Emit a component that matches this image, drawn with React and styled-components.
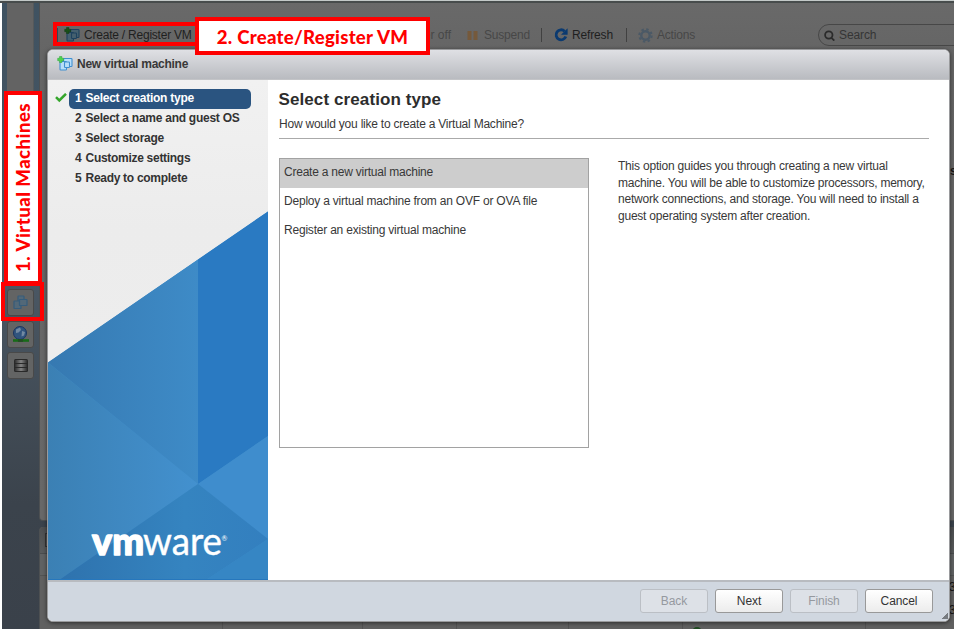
import React from 'react';
import styled, { createGlobalStyle } from 'styled-components';

const Global = createGlobalStyle`
  * { box-sizing: border-box; }
  body { margin: 0; overflow: hidden; font-family: "Liberation Sans", Arial, sans-serif; font-size: 12px; color: #383838; background: #fff; }
`;

const Screen = styled.div`
  position: relative;
  width: 954px;
  height: 629px;
  overflow: hidden;
  padding-left: 2px;
  display: flex;
  flex-direction: column;
`;
const TopEdge = styled.div`
  flex: none;
  height: 3px;
  margin-left: -2px;
  border-top: 1px solid #c3c9c8;
  background: #474c4c;
`;
const Workspace = styled.div`
  flex: 1;
  min-height: 0;
  display: flex;
  background: linear-gradient(#3f5261, #4a5763 45%, #3b434c 80%, #3a414a);
`;
const Rail = styled.nav`
  flex: none;
  width: 37px;
  display: flex;
  flex-direction: column;
  align-items: center;
  gap: 4px;
`;
const RailPanel = styled.div`
  width: 27px;
  height: 278px;
  margin-bottom: 4px;
  background: #636363;
  border-right: 1px solid #55595b;
`;
const RailButton = styled.div`
  width: 27px;
  height: 27px;
  border: 1px solid #494949;
  border-radius: 3px;
  background: #636464;
  display: flex;
  align-items: center;
  justify-content: center;
  margin-bottom: 0.5px;
`;
const Main = styled.main`
  flex: 1;
  display: flex;
  flex-direction: column;
  gap: 6px;
`;
const Content = styled.section`
  height: 518px;
  border: solid #4d5052;
  border-width: 0 0 1px 1px;
  border-radius: 0 0 0 4px;
  background: linear-gradient(#696969, #656565 50px, #686868);
`;
const Toolbar = styled.div`
  height: 46px;
  padding: 18px 0 0 13px;
  display: flex;
  align-items: center;
`;
const Tool = styled.div`
  flex: none;
  width: ${p => p.$w}px;
  padding-left: ${p => p.$pad || 0}px;
  display: flex;
  align-items: center;
  gap: ${p => p.$gap || 5}px;
  justify-content: ${p => (p.$end ? 'flex-end' : 'flex-start')};
  color: ${p => (p.$off ? '#474747' : '#1f1f1f')};
  letter-spacing: ${p => p.$ls || 0}px;
  white-space: nowrap;
`;
const Divider = styled.i`
  flex: none;
  width: 1px;
  height: 14px;
  background: #414141;
`;
const Accent = styled(Divider)`
  margin-left: 4px;
  margin-right: -5px;
  background: #2c4a59;
`;
const SearchBox = styled.div`
  flex: none;
  margin-left: 122px;
  width: 150px;
  height: 22px;
  border: 1px solid #474747;
  border-radius: 11px;
  padding-left: 5px;
  display: flex;
  align-items: center;
  gap: 4px;
  color: #353535;
  letter-spacing: -0.1px;
`;
const Tasks = styled.section`
  flex: 1;
  display: flex;
  flex-direction: column;
  border-left: 1px solid #4d5052;
  border-radius: 4px 0 0 0;
  overflow: hidden;
  background: #606263;
`;
const TasksBar = styled.div`
  height: 27px;
  padding: 6px 5px;
  background: linear-gradient(#4d4f51, #595b5c);
  border-bottom: 1px solid #4b4d4e;
`;
const TasksIcon = styled.i`
  display: block;
  width: 12px;
  height: 14px;
  border: 1px solid #333;
`;
const TaskHead = styled.div`
  height: 22px;
  border-bottom: 1px solid #525454;
`;
const TaskGrid = styled.div`
  flex: 1;
  display: grid;
  grid-template-columns: 183px 140px 94px 112px 114px 183px 1fr;
`;
const TaskCell = styled.div`
  height: 100%;
  border-right: 1px solid #535353;
  display: flex;
  align-items: flex-end;
  padding-left: 9px;
  background: #606060;
`;
const StatusDot = styled.i`
  width: 10px;
  height: 10px;
  border-radius: 50%;
  background: #1f4a21;
  margin-bottom: -8px;
`;

const Dialog = styled.section`
  position: absolute;
  left: 47px;
  top: 49px;
  width: 903px;
  height: 573px;
  border: 1px solid #9a9b9d;
  border-radius: 6px;
  overflow: hidden;
  background: #fff;
  box-shadow: 0 1px 4px rgba(0, 0, 0, 0.55);
  display: flex;
  flex-direction: column;
`;
const DialogHeader = styled.header`
  flex: none;
  height: 30px;
  padding: 0 0 2px 9px;
  display: flex;
  align-items: center;
  gap: 4px;
  font-weight: bold;
  letter-spacing: -0.26px;
  background: linear-gradient(#dfe0e4, #b9bbc0);
  border-bottom: 1px solid #c3c4c7;
`;
const DialogBody = styled.div`
  flex: 1;
  display: flex;
  min-height: 0;
`;
const Side = styled.aside`
  position: relative;
  flex: none;
  width: 220px;
  background: linear-gradient(#f1f1f1, #ececec 30%, #efefef);
  padding: 9px 0 0 7px;
`;
const SideArt = styled.svg`
  position: absolute;
  left: 0;
  top: 0;
`;
const Step = styled.div`
  position: relative;
  display: grid;
  grid-template-columns: 14px 182px;
  align-items: center;
  height: 20px;
  font-weight: bold;
`;
const StepName = styled.div`
  height: 20px;
  line-height: 18px;
  padding-left: 6px;
  border-radius: 5px;
  white-space: nowrap;
  color: ${p => (p.$on ? '#fff' : '#333')};
  background: ${p => (p.$on ? '#2a5480' : 'transparent')};
  letter-spacing: ${p => p.$ls}px;
`;
const StepNumber = styled.span`
  display: inline-block;
  width: 10.5px;
`;
const Pane = styled.div`
  flex: 1;
  padding: 10px 20px 0 11px;
`;
const Title = styled.h1`
  margin: 0 0 0 -0.5px;
  font-size: 17px;
  line-height: 20px;
  letter-spacing: 0.1px;
  color: #2d2d2d;
`;
const Question = styled.p`
  margin: 0;
  height: 29px;
  padding-top: 7px;
  line-height: 14px;
  letter-spacing: -0.22px;
  border-bottom: 1px solid #aaa;
`;
const Columns = styled.div`
  margin-top: 19px;
  display: flex;
  gap: 29px;
`;
const List = styled.div`
  flex: none;
  width: 310px;
  height: 290px;
  border: 1px solid #a2a2a2;
`;
const Option = styled.div`
  height: 29px;
  line-height: ${p => (p.$on ? 27 : 26)}px;
  padding-left: 4px;
  letter-spacing: ${p => p.$ls}px;
  background: ${p => (p.$on ? '#cdcdcd' : 'transparent')};
`;
const Help = styled.div`
  line-height: 16.5px;
  white-space: nowrap;
`;
const HelpLine = styled.div`
  letter-spacing: ${p => p.$ls}px;
`;
const DialogFooter = styled.footer`
  flex: none;
  height: 41px;
  border-top: 2px solid #b8bbc0;
  background: #d0d7e0;
  display: flex;
  justify-content: flex-end;
  gap: 7px;
  padding: 7px 16px 0 0;
`;
const Button = styled.button`
  width: 68px;
  height: 24px;
  padding: 0 0 1px;
  border: 1px solid ${p => (p.disabled ? '#bbbfc5' : '#999')};
  border-radius: 3px;
  font: 12px "Liberation Sans", Arial, sans-serif;
  letter-spacing: -0.1px;
  color: ${p => (p.disabled ? '#95999f' : '#333')};
  background: ${p => (p.disabled ? '#dde1e7' : 'linear-gradient(#fff, #ececec)')};
`;
const Grip = styled.i`
  position: absolute;
  right: 1px;
  bottom: 2px;
  width: 6px;
  height: 6px;
  background: linear-gradient(135deg, transparent 50%, #777b80 50%);
`;
const Peek = styled.span`
  position: absolute;
  left: ${p => (p.$bold ? 950 : 949)}px;
  top: ${p => p.$y}px;
  line-height: 14px;
  color: #161616;
  font-weight: ${p => (p.$bold ? 'bold' : 'normal')};
`;

const Callout = styled.div`
  position: absolute;
  border: 4px solid #fe0000;
  background: #fff;
  color: #f00;
  font-family: Lato, "Open Sans", sans-serif;
  font-weight: 900;
  font-size: 18.6px;
  display: flex;
  align-items: center;
  justify-content: center;
  white-space: nowrap;
`;
const StepTwo = styled(Callout)`
  left: 195px;
  top: 17px;
  width: 235px;
  height: 38px;
  padding-top: 1px;
  letter-spacing: 0.26px;
`;
const StepOne = styled(Callout)`
  left: 4px;
  top: 91px;
  width: 38px;
  height: 194px;
  padding-bottom: 2px;
  letter-spacing: 0.46px;
`;
const Upright = styled.span`
  writing-mode: vertical-rl;
  transform: rotate(180deg);
`;
const Highlight = styled.div`
  position: absolute;
  left: ${p => p.$x}px;
  top: ${p => p.$y}px;
  width: ${p => p.$w}px;
  height: ${p => p.$h}px;
  border: 4px solid #fe0000;
`;

const VmIcon = ({ dim, plus, size = 16 }) => (
  <svg width={size} height={size} viewBox="0 0 16 16">
    <g fill={dim ? '#45606f' : '#b7defa'} stroke={dim ? '#1e425f' : '#3f8fd0'} strokeWidth="1.1">
      <rect x="6.5" y="2.5" width="8.5" height="8" rx="0.8" />
      <rect x="3" y="5.5" width="6.5" height="8.5" rx="0.8" />
      <rect x="7.5" y="6" width="5" height="5.5" rx="0.8" />
    </g>
    {plus && <path d="M2.5 0.5h2.4v1.8h1.8v2.4H4.9v1.8H2.5V4.7H0.7V2.3h1.8Z" fill={dim ? '#195018' : '#4dd24d'} stroke={dim ? '#123d12' : '#2fa53a'} strokeWidth="0.5" />}
  </svg>
);
const RailVmIcon = () => (
  <svg width="15" height="15" viewBox="0 0 15 15" fill="#526878" stroke="#365c7b" strokeWidth="1.2">
    <rect x="5" y="1" width="6" height="7" rx="0.6" />
    <rect x="1" y="6" width="7" height="7.5" rx="0.6" />
    <rect x="6.5" y="4.5" width="7.5" height="6" rx="0.6" />
  </svg>
);
const GlobeIcon = () => (
  <svg width="18" height="18" viewBox="0 0 18 18">
    <circle cx="8" cy="8" r="6.5" fill="#31547e" stroke="#1b3561" />
    <path d="M4 4.5 8 2.5 9 5 6.5 7.5 4 8ZM10 6l3 1-1 3.5-2.5 1Z" fill="#7289a2" />
    <path d="M1 15.5h16" stroke="#176b18" strokeWidth="2.6" />
    <path d="M6 15.5h5" stroke="#244c24" strokeWidth="2.6" />
  </svg>
);
const DiskIcon = () => (
  <svg width="14" height="13" viewBox="0 0 14 13">
    <defs>
      <linearGradient id="platter">
        <stop stopColor="#303030" /><stop offset="0.5" stopColor="#828282" /><stop offset="1" stopColor="#303030" />
      </linearGradient>
    </defs>
    <rect width="14" height="13" rx="1.5" fill="#292929" />
    <path d="M1 1h12v3H1zM1 5h12v3H1zM1 9h12v3H1z" fill="url(#platter)" />
  </svg>
);
const RefreshIcon = () => (
  <svg width="14" height="14" viewBox="0 0 14 14">
    <path d="M10.6 3.2A5 5 0 1 0 11.8 8.5" fill="none" stroke="#0b3a70" strokeWidth="2.8" />
    <path d="M13.6 0.3V6.8H7Z" fill="#0b3a70" />
  </svg>
);
const GearIcon = () => (
  <svg width="15" height="15" viewBox="0 0 15 15" fill="none" stroke="#4b5966">
    <circle cx="7.5" cy="7.5" r="4.2" strokeWidth="2.4" />
    <circle cx="7.5" cy="7.5" r="6.2" strokeWidth="2" strokeDasharray="2.4 2.47" />
  </svg>
);
const SearchIcon = () => (
  <svg width="11" height="12" viewBox="0 0 11 12" fill="none" stroke="#2b2b2b" strokeWidth="1.8">
    <circle cx="4.8" cy="6" r="3.7" />
    <path d="M7.5 8.8 10.3 11.6" />
  </svg>
);
const PauseIcon = () => (
  <svg width="11" height="9" viewBox="0 0 11 9" fill="#75593b">
    <path d="M0.5 0h4v9h-4zM6.5 0h4v9h-4z" />
  </svg>
);
const Check = () => (
  <svg width="12" height="10" viewBox="0 0 12 10">
    <path d="M1 4.2 4.3 7.4 11 0.8" fill="none" stroke="#35a62c" strokeWidth="2.5" />
  </svg>
);

const BrandArt = () => (
  <SideArt width="220" height="500" viewBox="0 0 220 500">
    <defs>
      <linearGradient id="upper"><stop stopColor="#3679b1" /><stop offset="1" stopColor="#3e8bc7" /></linearGradient>
      <linearGradient id="left"><stop stopColor="#3b80b4" /><stop offset="1" stopColor="#4391cf" /></linearGradient>
      <linearGradient id="lower"><stop stopColor="#2e72ad" /><stop offset="0.6" stopColor="#3584c0" /><stop offset="1" stopColor="#337fbf" /></linearGradient>
    </defs>
    <path d="M0 282.500 220 131.500V500H0Z" fill="#3e8bc7" />
    <path d="M0 282.500 150 179.500V404Z" fill="url(#upper)" />
    <path d="M150 179.500 220 131.500V356L150 404Z" fill="#2a7ac2" />
    <path d="M0 282.500 150 404 11 500H0Z" fill="url(#left)" />
    <path d="M150 404 220 356V459Z" fill="#3f8dcd" />
    <path d="M150 404 220 459 158 500H11Z" fill="url(#lower)" />
    <path d="M220 459V500H158Z" fill="#3686c4" />
    <path d="M0 499.500h220" stroke="#2677bd" />
    <g fill="#fff" fontFamily="Lato, sans-serif">
      <text x="44" y="474.500" fontSize="37" fontWeight="900" textLength="52" lengthAdjust="spacingAndGlyphs" stroke="#fff" strokeWidth="1.4" strokeLinejoin="round">vm</text>
      <text x="95" y="474.500" fontSize="38" textLength="79" lengthAdjust="spacingAndGlyphs" stroke="#fff" strokeWidth="0.4">ware</text>
      <text x="173.500" y="461" fontSize="7">®</text>
    </g>
  </SideArt>
);

const steps = [
  ['1', 'Select creation type', -0.25],
  ['2', 'Select a name and guest OS', -0.26],
  ['3', 'Select storage', -0.25],
  ['4', 'Customize settings', -0.29],
  ['5', 'Ready to complete', -0.29],
];
const options = [
  ['Create a new virtual machine', -0.23],
  ['Deploy a virtual machine from an OVF or OVA file', -0.21],
  ['Register an existing virtual machine', -0.21],
];
const help = [
  ['This option guides you through creating a new virtual', -0.21],
  ['machine. You will be able to customize processors, memory,', -0.23],
  ['network connections, and storage. You will need to install a', -0.215],
  ['guest operating system after creation.', -0.23],
];

export default function App() {
  return (
    <Screen>
      <Global />
      <TopEdge />
      <Workspace>
        <Rail>
          <RailPanel />
          <RailButton><RailVmIcon /></RailButton>
          <RailButton><GlobeIcon /></RailButton>
          <RailButton><DiskIcon /></RailButton>
        </Rail>
        <Main>
          <Content>
            <Toolbar>
              <Accent />
              <Tool $w={161} $pad={11} $gap={4} $ls={-0.22}><VmIcon dim plus />Create / Register VM</Tool>
              <Tool $w={237} $end $off>Power off</Tool>
              <Tool $w={90} $pad={16} $gap={6} $off $ls={-0.2}><PauseIcon />Suspend</Tool>
              <Divider />
              <Tool $w={84} $pad={12} $gap={4} $ls={-0.15}><RefreshIcon />Refresh</Tool>
              <Divider />
              <Tool $w={69} $pad={11} $gap={4} $off $ls={-0.2}><GearIcon />Actions</Tool>
              <SearchBox><SearchIcon />Search</SearchBox>
            </Toolbar>
          </Content>
          <Tasks>
            <TasksBar><TasksIcon /></TasksBar>
            <TaskHead />
            <TaskGrid>
              <TaskCell /><TaskCell /><TaskCell /><TaskCell /><TaskCell />
              <TaskCell><StatusDot /></TaskCell>
              <TaskCell />
            </TaskGrid>
          </Tasks>
        </Main>
      </Workspace>
      <Peek $y={164} $bold>s</Peek>
      <Peek $y={580}>3</Peek>
      <Peek $y={603}>3</Peek>

      <Dialog>
        <DialogHeader><VmIcon plus />New virtual machine</DialogHeader>
        <DialogBody>
          <Side>
            <BrandArt />
            {steps.map(([n, name, ls], i) => (
              <Step key={n}>
                <span>{i === 0 && <Check />}</span>
                <StepName $on={i === 0} $ls={ls}><StepNumber>{n}</StepNumber>{name}</StepName>
              </Step>
            ))}
          </Side>
          <Pane>
            <Title>Select creation type</Title>
            <Question>How would you like to create a Virtual Machine?</Question>
            <Columns>
              <List>
                {options.map(([name, ls], i) => <Option key={name} $on={i === 0} $ls={ls}>{name}</Option>)}
              </List>
              <Help>
                {help.map(([line, ls]) => <HelpLine key={line} $ls={ls}>{line}</HelpLine>)}
              </Help>
            </Columns>
          </Pane>
        </DialogBody>
        <DialogFooter>
          <Button disabled>Back</Button>
          <Button>Next</Button>
          <Button disabled>Finish</Button>
          <Button>Cancel</Button>
          <Grip />
        </DialogFooter>
      </Dialog>

      <Highlight $x={53} $y={22} $w={146} $h={24} />
      <StepTwo>2. Create/Register VM</StepTwo>
      <StepOne><Upright>1. Virtual Machines</Upright></StepOne>
      <Highlight $x={1} $y={282} $w={43} $h={39} />
    </Screen>
  );
}
